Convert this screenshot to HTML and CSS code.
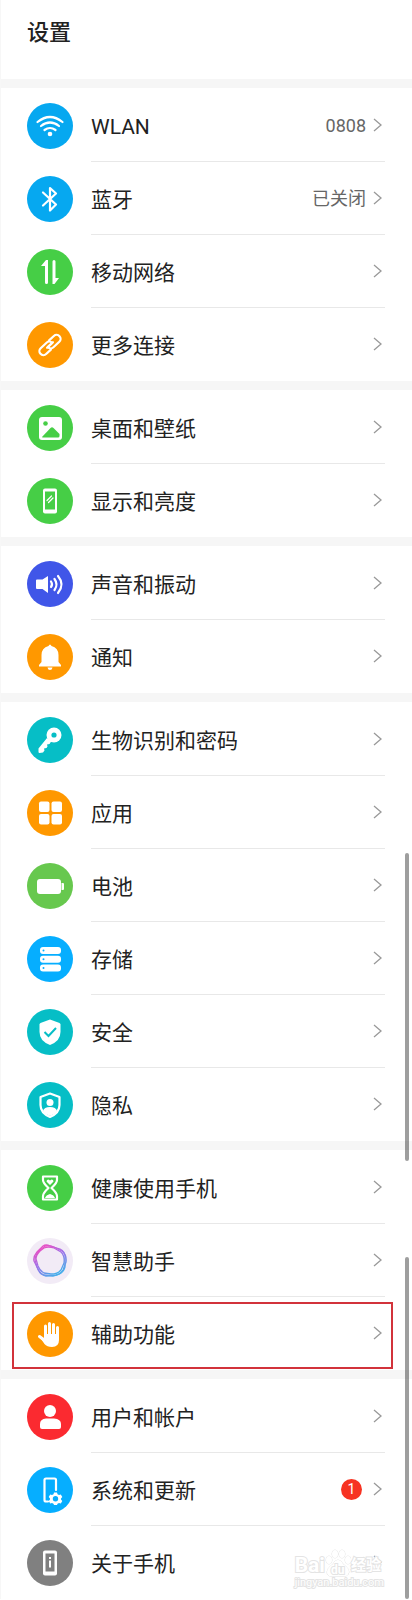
FILE: index.html
```html
<!DOCTYPE html>
<html lang="zh-CN">
<head>
    <meta charset="UTF-8">
    <meta name="viewport" content="width=device-width, initial-scale=1.0">
    <title>设置</title>
    <link rel="stylesheet" href="styles.css">
</head>
<body>
<div class="page">
    <header class="header">
        <h1>设置</h1>
    </header>

    <main>
        <ul class="group">
            <li><a class="row" href="#wlan">
                <svg class="icon sky" viewBox="0 0 46 46">
                    <path class="line" d="M10.5 19Q23 9 35.500 19M14 23Q23 16 32 23M17.500 27Q23 23 28.500 27"/>
                    <circle cx="23" cy="31" r="2.300"/>
                </svg>
                <span class="item"><span class="label">WLAN</span><span class="value">0808</span><svg class="arrow" viewBox="0 0 9 14"><path d="M1 1l7 6-7 6"/></svg></span>
            </a></li>
            <li><a class="row" href="#bluetooth">
                <svg class="icon sky" viewBox="0 0 46 46">
                    <path class="line" d="M16 16.500L29 28.500L23 34.500V12L29 17.500L16 29.500"/>
                </svg>
                <span class="item"><span class="label">蓝牙</span><span class="value">已关闭</span><svg class="arrow" viewBox="0 0 9 14"><path d="M1 1l7 6-7 6"/></svg></span>
            </a></li>
            <li><a class="row" href="#mobile">
                <svg class="icon green" viewBox="0 0 46 46">
                    <path d="M14 17L19 11H21V33.500Q21 35 19.500 35T18 33.500V17ZM32 29H28.500V12.500Q28.500 11 27 11T25.500 12.500V35H27.500Z"/>
                </svg>
                <span class="item"><span class="label">移动网络</span><svg class="arrow" viewBox="0 0 9 14"><path d="M1 1l7 6-7 6"/></svg></span>
            </a></li>
            <li><a class="row" href="#connections">
                <svg class="icon orange" viewBox="0 0 46 46">
                    <g class="line" transform="rotate(-43 23 23)">
                        <path d="M20.500 27H14A4 4 0 0 1 14 19H22A4 4 0 0 1 26 23H19"/>
                        <path d="M25.500 19H32A4 4 0 0 1 32 27H24A4 4 0 0 1 20 23H27"/>
                    </g>
                </svg>
                <span class="item"><span class="label">更多连接</span><svg class="arrow" viewBox="0 0 9 14"><path d="M1 1l7 6-7 6"/></svg></span>
            </a></li>
        </ul>

        <ul class="group">
            <li><a class="row" href="#wallpaper">
                <svg class="icon green" viewBox="0 0 46 46">
                    <rect x="12" y="12" width="23" height="23" rx="3"/>
                    <circle class="hole" cx="18.500" cy="18.500" r="2.300"/>
                    <path class="hole" d="M15 32L23.500 23Q25 21.500 26.500 23L32.500 29V31Q32.500 32.500 31 32.500H15.500Z"/>
                </svg>
                <span class="item"><span class="label">桌面和壁纸</span><svg class="arrow" viewBox="0 0 9 14"><path d="M1 1l7 6-7 6"/></svg></span>
            </a></li>
            <li><a class="row" href="#display">
                <svg class="icon green" viewBox="0 0 46 46">
                    <rect x="16" y="10.500" width="14" height="25" rx="2"/>
                    <path class="hole" d="M18 13.500H28V31.500H18Z"/>
                    <path class="line thin" d="M20 22.500L24.500 18M21.500 24.500L26 20"/>
                </svg>
                <span class="item"><span class="label">显示和亮度</span><svg class="arrow" viewBox="0 0 9 14"><path d="M1 1l7 6-7 6"/></svg></span>
            </a></li>
        </ul>

        <ul class="group">
            <li><a class="row" href="#sound">
                <svg class="icon indigo" viewBox="0 0 46 46">
                    <path d="M10 18.500H15.500L21 15V32L15.500 28H10Q9 28 9 27V19.500Q9 18.500 10 18.500Z"/>
                    <path class="line" d="M24 20.500Q26 23.500 24 26M27.500 18Q31.500 23.500 27.500 29M31 15Q38 23.500 31 32"/>
                </svg>
                <span class="item"><span class="label">声音和振动</span><svg class="arrow" viewBox="0 0 9 14"><path d="M1 1l7 6-7 6"/></svg></span>
            </a></li>
            <li><a class="row" href="#notifications">
                <svg class="icon orange" viewBox="0 0 46 46">
                    <path d="M21.500 12Q23 9 24.500 12Q31.500 14 31.500 21V28L34 31V32.500H12V31L14.500 28V21Q14.500 14 21.500 12ZM20.500 33.500H25.500Q25 36 23 36T20.500 33.500Z"/>
                </svg>
                <span class="item"><span class="label">通知</span><svg class="arrow" viewBox="0 0 9 14"><path d="M1 1l7 6-7 6"/></svg></span>
            </a></li>
        </ul>

        <ul class="group">
            <li><a class="row" href="#biometrics">
                <svg class="icon teal" viewBox="0 0 46 46">
                    <circle cx="27" cy="18" r="7.500"/>
                    <path d="M20 21L11.500 31.500V35Q11.500 36 12.500 36L16 35.500L17.500 33.500L17 31.500L19.500 31L20.500 29.500L20 27.500L22.500 27L24.500 24Z"/>
                    <circle class="hole" cx="27" cy="18" r="2.600"/>
                </svg>
                <span class="item"><span class="label">生物识别和密码</span><svg class="arrow" viewBox="0 0 9 14"><path d="M1 1l7 6-7 6"/></svg></span>
            </a></li>
            <li><a class="row" href="#apps">
                <svg class="icon orange" viewBox="0 0 46 46">
                    <rect x="12" y="11.500" width="10.500" height="10.500" rx="2"/>
                    <rect x="24.500" y="11.500" width="10.500" height="10.500" rx="2"/>
                    <rect x="12" y="24" width="10.500" height="10.500" rx="2"/>
                    <rect x="24.500" y="24" width="10.500" height="10.500" rx="2"/>
                </svg>
                <span class="item"><span class="label">应用</span><svg class="arrow" viewBox="0 0 9 14"><path d="M1 1l7 6-7 6"/></svg></span>
            </a></li>
            <li><a class="row" href="#battery">
                <svg class="icon lime" viewBox="0 0 46 46">
                    <rect x="10" y="16" width="24" height="15" rx="3"/>
                    <path d="M34.500 20H36Q37 20 37 21V26Q37 27 36 27H34.500Z"/>
                </svg>
                <span class="item"><span class="label">电池</span><svg class="arrow" viewBox="0 0 9 14"><path d="M1 1l7 6-7 6"/></svg></span>
            </a></li>
            <li><a class="row" href="#storage">
                <svg class="icon blue" viewBox="0 0 46 46">
                    <rect x="13" y="11" width="21" height="7" rx="3"/>
                    <rect x="13" y="19.750" width="21" height="7" rx="3"/>
                    <rect x="13" y="28.500" width="21" height="7" rx="3"/>
                    <g class="hole"><circle cx="16.500" cy="14.500" r="1"/><circle cx="16.500" cy="23.250" r="1"/><circle cx="16.500" cy="32" r="1"/></g>
                </svg>
                <span class="item"><span class="label">存储</span><svg class="arrow" viewBox="0 0 9 14"><path d="M1 1l7 6-7 6"/></svg></span>
            </a></li>
            <li><a class="row" href="#security">
                <svg class="icon teal" viewBox="0 0 46 46">
                    <path d="M23 10.500L32.500 14Q33.500 14.500 33.500 15.500V23Q33.500 32 23 36Q12.500 32 12.500 23V15.500Q12.500 14.500 13.500 14Z"/>
                    <path class="cut" d="M17.500 23L21.500 27L29 19"/>
                </svg>
                <span class="item"><span class="label">安全</span><svg class="arrow" viewBox="0 0 9 14"><path d="M1 1l7 6-7 6"/></svg></span>
            </a></li>
            <li><a class="row" href="#privacy">
                <svg class="icon teal" viewBox="0 0 46 46">
                    <path class="line" d="M23 11.500L32.500 15V23Q32.500 31 23 35Q13.500 31 13.500 23V15Z"/>
                    <circle cx="23" cy="20.500" r="3.500"/>
                    <path d="M16 29Q17 25 23 25T30 29Q27 33 23 34Q19 33 16 29Z"/>
                </svg>
                <span class="item"><span class="label">隐私</span><svg class="arrow" viewBox="0 0 9 14"><path d="M1 1l7 6-7 6"/></svg></span>
            </a></li>
        </ul>

        <ul class="group">
            <li><a class="row" href="#wellbeing">
                <svg class="icon green" viewBox="0 0 46 46">
                    <path class="line" d="M16 11.500H30V15Q30 18 24.500 23Q30 28 30 31V34.500H16V31Q16 28 21.500 23Q16 18 16 15Z"/>
                    <path d="M23 20L19.500 16.500Q19.500 14.500 21.500 14.500L23 15.500L24.500 14.500Q26.500 14.500 26.500 16.500ZM18 33Q19 30 23 29Q27 30 28 33Z"/>
                </svg>
                <span class="item"><span class="label">健康使用手机</span><svg class="arrow" viewBox="0 0 9 14"><path d="M1 1l7 6-7 6"/></svg></span>
            </a></li>
            <li><a class="row" href="#assistant">
                <svg class="icon pale" viewBox="0 0 46 46">
                    <defs>
                        <linearGradient id="ring" x1="0.200" y1="0" x2="0.800" y2="1">
                            <stop offset="0" stop-color="#f04cc0"/>
                            <stop offset="0.450" stop-color="#a070e8"/>
                            <stop offset="1" stop-color="#3cb4ea"/>
                        </linearGradient>
                    </defs>
                    <g class="ring">
                        <path d="M16 8Q19 6 23 8L33 11Q39 14 38 21L38 29Q36 36 29 37L19 38Q13 37 11 31L7 23Q6 19 10 14Z"/>
                        <path d="M18 8Q22 7 27 9L35 13Q40 17 39 24L36 32Q33 37 26 38L17 37Q12 35 10 29L8 22Q8 18 12 13Z"/>
                        <path d="M17 10Q21 8 27 10L34 14Q38 18 37 25L34 32Q31 36 24 36L17 35Q13 33 11 28L9 21Q9 17 13 13Z"/>
                    </g>
                </svg>
                <span class="item"><span class="label">智慧助手</span><svg class="arrow" viewBox="0 0 9 14"><path d="M1 1l7 6-7 6"/></svg></span>
            </a></li>
            <li><a class="row marked" href="#accessibility">
                <svg class="icon orange" viewBox="0 0 46 46">
                    <path class="line finger" d="M18.500 26V15M22.500 25V12.500M26.500 25V13.500M30.500 27V16.500M18.500 30L12.500 25.500"/>
                    <path d="M17 23H32V29Q32 36 25 36Q20 36 17.500 33L13 26.500L17 28Z"/>
                </svg>
                <span class="item"><span class="label">辅助功能</span><svg class="arrow" viewBox="0 0 9 14"><path d="M1 1l7 6-7 6"/></svg></span>
            </a></li>
        </ul>

        <ul class="group">
            <li><a class="row" href="#users">
                <svg class="icon red" viewBox="0 0 46 46">
                    <circle cx="23" cy="17" r="6"/>
                    <path d="M13 33V30Q13 25 19 24.500H27Q34 25 34 30V33Q34 35 32 35H15Q13 35 13 33Z"/>
                </svg>
                <span class="item"><span class="label">用户和帐户</span><svg class="arrow" viewBox="0 0 9 14"><path d="M1 1l7 6-7 6"/></svg></span>
            </a></li>
            <li><a class="row" href="#system">
                <svg class="icon blue" viewBox="0 0 46 46">
                    <path class="line" d="M29 23V13Q29 11.500 27.500 11.500H19Q17.500 11.500 17.500 13V33Q17.500 34.500 19 34.500H21"/>
                    <path d="M27 25.500h3l.5 1.700 1.500.8 1.800-.5 1.500 2.600-1.300 1.300v1.200l1.300 1.300-1.500 2.600-1.800-.5-1.500.8-.5 1.200h-3l-.5-1.200-1.500-.8-1.800.5-1.500-2.600 1.300-1.300v-1.200l-1.300-1.300 1.500-2.600 1.800.5 1.500-.8Z"/>
                    <circle class="hole" cx="28.500" cy="31.800" r="2.700"/>
                </svg>
                <span class="item"><span class="label">系统和更新</span><span class="badge">1</span><svg class="arrow" viewBox="0 0 9 14"><path d="M1 1l7 6-7 6"/></svg></span>
            </a></li>
            <li><a class="row" href="#about">
                <svg class="icon gray" viewBox="0 0 46 46">
                    <rect x="16" y="10.500" width="14" height="25" rx="2"/>
                    <path class="hole" d="M18.500 13.500H27.500V31.500H18.500Z"/>
                    <path d="M22 17h2v2h-2zM22 20.500h2v7h-2z"/>
                </svg>
                <span class="item"><span class="label">关于手机</span><svg class="arrow" viewBox="0 0 9 14"><path d="M1 1l7 6-7 6"/></svg></span>
            </a></li>
        </ul>
    </main>

    <div class="watermark">
        <div class="brand">
            <span>Bai</span>
            <span class="paw">
                <svg viewBox="0 0 26 28"><ellipse cx="4" cy="11" rx="3" ry="4"/><ellipse cx="10" cy="5" rx="3" ry="4"/><ellipse cx="17" cy="5" rx="3" ry="4"/><ellipse cx="23" cy="11" rx="3" ry="4"/><path d="M13 11Q16 11 18 15Q24 19 24 23Q23 28 18 27H8Q2 28 2 23Q2 19 8 15Q10 11 13 11Z"/></svg>
                <span class="du">du</span>
            </span>
            <span class="cn">经验</span>
        </div>
        <div class="site">jingyan.baidu.com</div>
    </div>
    <div class="scrollbar upper"></div>
    <div class="scrollbar lower"></div>
</div>
</body>
</html>
```

FILE: styles.css
```css
* {
    box-sizing: border-box;
}

body {
    margin: 0;
    background-color: #fff;
    color: #222;
    font-family: Roboto, "Noto Sans CJK SC", sans-serif;
}

.page {
    position: relative;
    border-left: 1px solid #f7f7f7;
}

.header {
    height: 79px;
    padding: 17px 26px;
}

h1 {
    margin: 0;
    font-size: 22px;
    line-height: 32px;
    font-weight: 500;
}

.group {
    margin: 0;
    padding: 1px 27px 0 26px;
    border-top: 9px solid #f6f6f6;
    list-style: none;
}

.row {
    position: relative;
    display: flex;
    align-items: center;
    gap: 18px;
    height: 73px;
    color: inherit;
    text-decoration: none;
}

.item {
    flex: 1;
    display: flex;
    align-items: center;
    gap: 7px;
    height: 100%;
    padding-right: 3px;
    border-bottom: 1px solid #e8e8e8;
}

li:last-child .item {
    border-bottom-color: transparent;
}

.label {
    flex: 1;
    padding-top: 3px;
    font-size: 21px;
    line-height: 30px;
}

.value {
    padding-top: 1px;
    color: #666;
    font-size: 18px;
    line-height: 28px;
}

.arrow {
    width: 9px;
    height: 14px;
    fill: none;
    stroke: #999;
    stroke-width: 1.3;
}

.badge {
    width: 21px;
    margin-right: 4px;
    border-radius: 50%;
    background-color: #f73322;
    color: #fff;
    font-size: 14px;
    line-height: 21px;
    text-align: center;
}

/* icons */
.icon {
    flex: none;
    width: 46px;
    height: 46px;
    border-radius: 50%;
    background-color: var(--tint);
    fill: #fff;
}

.line {
    fill: none;
    stroke: #fff;
    stroke-width: 2.2;
    stroke-linecap: round;
    stroke-linejoin: round;
}

.thin {
    stroke-width: 1.2;
}

.finger {
    stroke-width: 3;
}

.hole {
    fill: var(--tint);
}

.cut {
    fill: none;
    stroke: var(--tint);
    stroke-width: 2;
}

.ring {
    fill: none;
    stroke: url(#ring);
    stroke-width: 1.3;
}

.sky { --tint: #06a8f0; }
.blue { --tint: #06aeff; }
.green { --tint: #46ce46; }
.lime { --tint: #67c84e; }
.orange { --tint: #ff9800; }
.indigo { --tint: #4056e8; }
.teal { --tint: #06bec6; }
.red { --tint: #fb2a30; }
.gray { --tint: #808080; }
.pale { --tint: #f2ebf6; }

/* red frame over the accessibility row */
.marked::after {
    content: "";
    position: absolute;
    inset: 5px -8px 1px -15px;
    border: 2px solid #d2333b;
}

.scrollbar {
    position: absolute;
    right: 3px;
    width: 4px;
    border-radius: 2px;
    background-color: rgba(0, 0, 0, 0.38);
}

.upper {
    top: 853px;
    height: 308px;
}

.lower {
    top: 1257px;
    bottom: 0;
}

.watermark {
    position: absolute;
    right: 28px;
    bottom: 10px;
    color: #fff;
    -webkit-text-stroke: 2px #e4e4e4;
    paint-order: stroke fill;
}

.brand {
    display: flex;
    align-items: flex-end;
    font-size: 21px;
    line-height: 24px;
    font-weight: bold;
}

.paw {
    position: relative;
    width: 26px;
    height: 28px;
}

.paw svg {
    width: 26px;
    height: 28px;
    fill: #fff;
    stroke: #e0e0e0;
}

.du {
    position: absolute;
    left: 6px;
    bottom: 0;
    font-size: 12px;
    line-height: 14px;
}

.cn {
    font-size: 15px;
}

.site {
    font-size: 11px;
    line-height: 12px;
}
```
